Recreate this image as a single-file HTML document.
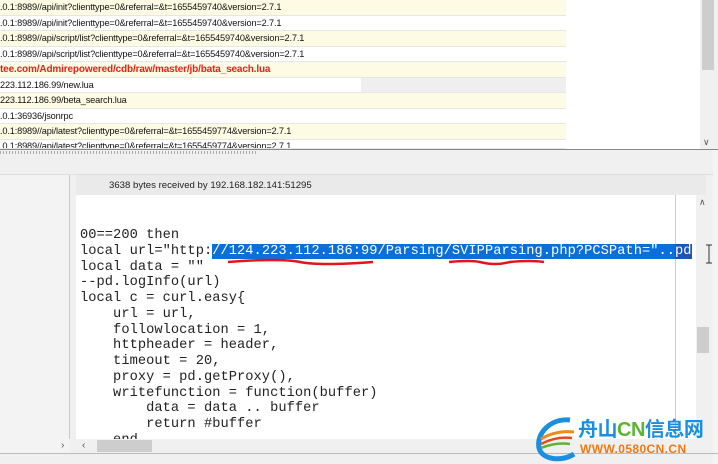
<!DOCTYPE html>
<html><head><meta charset="utf-8"><style>
*{margin:0;padding:0;box-sizing:border-box}
body{width:718px;height:464px;overflow:hidden;background:#f0f0f0;position:relative;font-family:"Liberation Sans",sans-serif}
.a{position:absolute}
.row{position:absolute;left:0;width:566px;height:15.5px;font-size:9.2px;line-height:15px;white-space:nowrap;color:#111;border-bottom:1px solid #e6e6e6;overflow:hidden;letter-spacing:-0.15px}
.y{background:#fdfbe3}.w{background:#fff}
.code{position:absolute;left:80px;top:228px;font-family:"Liberation Mono",monospace;font-size:13.7px;line-height:15.75px;color:#222;white-space:pre;letter-spacing:0.05px}
.sel{background:#0a6fd8;color:#fff;display:inline-block;height:15px;line-height:15px;vertical-align:top}
</style></head><body>
<div class="a" style="left:0;top:0;width:700px;height:149px;background:#fff"></div>
<div class="row y" style="top:0">.0.1:8989//api/init?clienttype=0&amp;referral=&amp;t=1655459740&amp;version=2.7.1</div>
<div class="row w" style="top:15.5px">.0.1:8989//api/init?clienttype=0&amp;referral=&amp;t=1655459740&amp;version=2.7.1</div>
<div class="row y" style="top:31px">.0.1:8989//api/script/list?clienttype=0&amp;referral=&amp;t=1655459740&amp;version=2.7.1</div>
<div class="row w" style="top:46.5px">.0.1:8989//api/script/list?clienttype=0&amp;referral=&amp;t=1655459740&amp;version=2.7.1</div>
<div class="row y" style="top:62px;color:#e8201a;font-weight:bold;font-size:10px">tee.com/Admirepowered/cdb/raw/master/jb/bata_seach.lua</div>
<div class="row w" style="top:77.5px;background:linear-gradient(90deg,#fff 361px,#efefef 361px)">223.112.186.99/new.lua</div>
<div class="row y" style="top:93px">223.112.186.99/beta_search.lua</div>
<div class="row w" style="top:108.5px">.0.1:36936/jsonrpc</div>
<div class="row y" style="top:124px">.0.1:8989//api/latest?clienttype=0&amp;referral=&amp;t=1655459774&amp;version=2.7.1</div>
<div class="row w" style="top:139.5px;height:9px;line-height:12px">.0.1:8989//api/latest?clienttype=0&amp;referral=&amp;t=1655459774&amp;version=2.7.1</div>
<div class="a" style="left:700px;top:0;width:18px;height:149px;background:#f0f0f0"></div>
<div class="a" style="left:702px;top:0;width:12px;height:70px;background:#cdcdcd"></div>
<div class="a" style="left:703px;top:137px;font-size:9px;color:#555">&#8744;</div>
<div class="a" style="left:0;top:149px;width:718px;height:1px;background:#888"></div>
<div class="a" style="left:0;top:151px;width:257px;height:3px;background:repeating-linear-gradient(90deg,#aaa 0 1px,transparent 1px 3px)"></div>
<div class="a" style="left:0;top:174px;width:718px;height:1px;background:#ddd"></div>
<div class="a" style="left:0;top:175px;width:70px;height:278px;background:#f3f3f3;border-right:1px solid #c8c8c8"></div>
<div class="a" style="left:76px;top:175px;width:630px;height:20px;background:#eaeaea"></div>
<div class="a" style="left:109px;top:180px;font-size:9.6px;color:#222">3638 bytes received by 192.168.182.141:51295</div>
<div class="a" style="left:76px;top:195px;width:620px;height:244px;background:#fff"></div>
<div class="a" style="left:675px;top:195px;width:1px;height:244px;background:#ccc"></div>
<div class="a" style="left:696px;top:195px;width:14px;height:244px;background:#f0f0f0"></div>
<div class="a" style="left:697px;top:327px;width:12px;height:26px;background:#cdcdcd"></div>
<div class="a" style="left:699px;top:197px;font-size:9px;color:#555">&#8743;</div>
<div class="a" style="left:713px;top:150px;width:5px;height:314px;background:#f4f4f4"></div>
<div class="code">00==200 then
local url="http:<span class="sel">//124.223.112.186:99/Parsing/SVIPParsing.php?PCSPath="..<span style="background:#1c54b8">pd</span></span>
local data = ""
--pd.logInfo(url)
local c = curl.easy{
    url = url,
    followlocation = 1,
    httpheader = header,
    timeout = 20,
    proxy = pd.getProxy(),
    writefunction = function(buffer)
        data = data .. buffer
        return #buffer
    end</div>
<svg class="a" style="left:0;top:0" width="718" height="464">
<path d="M228 262 Q280 258 300 262 T373 262" stroke="#e3141e" stroke-width="2.5" fill="none"/>
<path d="M449 262 Q470 260 480 262 Q495 266 510 262 Q530 260 544 262" stroke="#e3141e" stroke-width="2.5" fill="none"/>
<path d="M709 245 v18 M706 245 h6 M706 263 h6" stroke="#333" stroke-width="1"/>
</svg>
<div class="a" style="left:76px;top:439px;width:620px;height:14px;background:#f0f0f0"></div>
<div class="a" style="left:0;top:439px;width:70px;height:14px;background:#f3f3f3"></div>
<div class="a" style="left:61px;top:440px;font-size:10px;color:#555">&#8250;</div>
<div class="a" style="left:82px;top:440px;font-size:10px;color:#555">&#8249;</div>
<div class="a" style="left:97px;top:440px;width:55px;height:12px;background:#cdcdcd"></div>
<div class="a" style="left:0;top:453px;width:718px;height:1px;background:#bbb"></div>
<svg class="a" style="left:534px;top:416px" width="44" height="48">
<path d="M36 4 C16 2 2 18 5 32 C8 44 28 46 40 38" stroke="#1a8fe0" stroke-width="5" fill="none"/>
<path d="M7 23 Q22 14 40 16" stroke="#f08a1c" stroke-width="3" fill="none"/>
<path d="M7 28 Q22 20 38 22" stroke="#e84a1c" stroke-width="2.5" fill="none"/>
<path d="M7 32 Q22 26 36 28" stroke="#5cb531" stroke-width="2.5" fill="none"/>
</svg>
<div class="a" style="left:578px;top:419px;font-family:'Liberation Sans','Noto Sans CJK SC',sans-serif;font-size:20px;font-weight:bold;line-height:22px;color:#1a8fe0;white-space:nowrap;letter-spacing:-0.5px">舟山<span style="color:#5cb531">CN</span>信息网</div>
<div class="a" style="left:580px;top:443px;font-size:12px;font-weight:bold;line-height:13px;color:#f07a10;white-space:nowrap;letter-spacing:0.4px">WWW.0580CN.CN</div>
</body></html>
